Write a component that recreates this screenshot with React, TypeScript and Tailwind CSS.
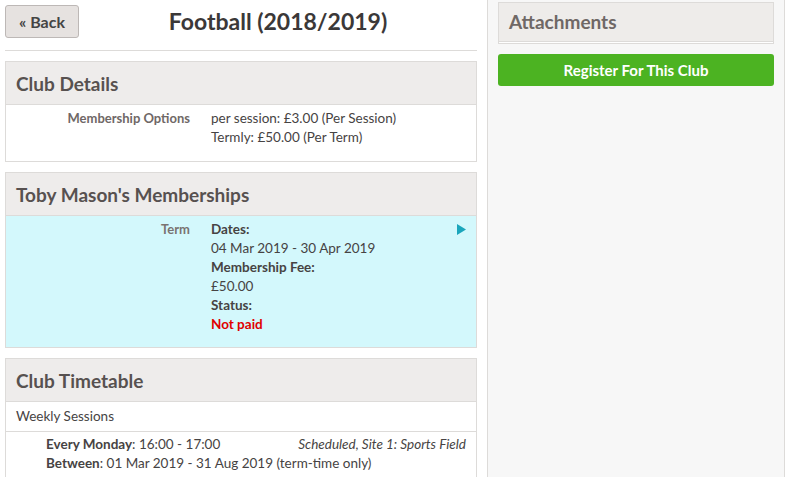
import React from "react";

const PanelHeader = ({ title }: { title: string }) => (
  <div className="h-[43px] flex items-center px-[10px] pt-[2px] bg-[#eeeceb] border-b border-[#dddbd9]">
    <h2 className="text-[19px] font-bold text-[#575150]">{title}</h2>
  </div>
);

const App = () => {
  return (
    <div className="flex h-screen min-h-[477px] bg-white text-[13.5px] text-[#464343] font-['Lato','Open_Sans',sans-serif] overflow-hidden">
      {/* Main column */}
      <div className="w-[487px] shrink-0 pl-[5px] pr-[10px] pt-[5px]">
        <div className="flex items-center h-[33px]">
          <button className="h-[33px] w-[74px] rounded-[3px] border border-[#bdb8b6] bg-[#e6e2e0] text-[16px] font-bold text-[#444]">
            « Back
          </button>
          <h1 className="flex-1 text-center text-[23px] font-bold text-[#3b3838]">
            Football (2018/2019)
          </h1>
        </div>
        <hr className="mt-[12px] border-t border-[#dddbd9]" />

        {/* Club Details */}
        <div className="mt-[10px] border border-[#dddbd9]">
          <PanelHeader title="Club Details" />
          <div className="flex pt-[4px] pb-[14px] leading-[19px]">
            <div className="w-[184px] text-right font-bold text-[#6f6866] text-[13px]">Membership Options</div>
            <div className="pl-[21px]">
              <div>per session: £3.00 (Per Session)</div>
              <div>Termly: £50.00 (Per Term)</div>
            </div>
          </div>
        </div>

        {/* Memberships */}
        <div className="mt-[10px] border border-[#dddbd9]">
          <PanelHeader title="Toby Mason's Memberships" />
          <div className="flex bg-[#d3f8fc] pt-[4px] pb-[13px] leading-[19px]">
            <div className="w-[184px] text-right font-bold text-[#7a7371] text-[13px]">Term</div>
            <div className="pl-[21px] flex-1">
              <div className="font-bold">Dates:</div>
              <div>04 Mar 2019 - 30 Apr 2019</div>
              <div className="font-bold">Membership Fee:</div>
              <div>£50.00</div>
              <div className="font-bold">Status:</div>
              <div className="font-bold text-[#e00000]">Not paid</div>
            </div>
            <div className="pr-[10px] pt-[4px]">
              <svg width="9" height="11" viewBox="0 0 9 11">
                <path d="M0 0 L9 5.5 L0 11 Z" fill="#1aa6bc" />
              </svg>
            </div>
          </div>
        </div>

        {/* Timetable */}
        <div className="mt-[10px] border border-[#dddbd9]">
          <PanelHeader title="Club Timetable" />
          <div className="h-[30px] flex items-center px-[10px] border-b border-[#dddbd9]">
            Weekly Sessions
          </div>
          <div className="pl-[40px] pr-[10px] pt-[3px] pb-[8px] leading-[19px]">
            <div className="flex justify-between">
              <div>
                <span className="font-bold">Every Monday</span>: 16:00 - 17:00
              </div>
              <div className="italic">Scheduled, Site 1: Sports Field</div>
            </div>
            <div>
              <span className="font-bold">Between</span>: 01 Mar 2019 - 31 Aug 2019 (term-time only)
            </div>
          </div>
        </div>
      </div>

      {/* Sidebar */}
      <div className="flex-1 bg-[#f7f7f7] border-l border-r border-[#dddbd9] px-[10px] pt-[2px]">
        <div className="border border-[#dddbd9]">
          <div className="h-[38px] flex items-center px-[10px] bg-[#eeecea]">
            <h2 className="text-[19px] font-bold text-[#6f6866]">Attachments</h2>
          </div>
          <div className="h-[2px] border-t border-[#dddbd9] bg-white" />
        </div>
        <button className="mt-[10px] w-full h-[32px] rounded-[3px] bg-[#4cb322] text-white text-[15px] font-bold">
          Register For This Club
        </button>
      </div>
    </div>
  );
};

export default App;
